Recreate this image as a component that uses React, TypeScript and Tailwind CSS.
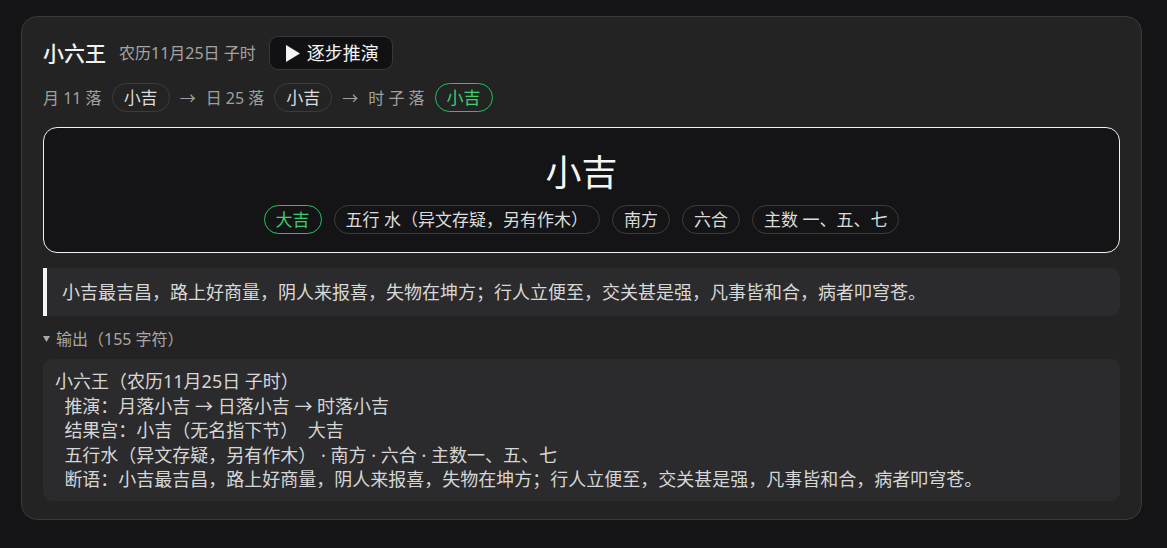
const font = "font-['Noto_Sans','Noto_Sans_CJK_SC',sans-serif]";

function Pill({ label, good }: { label: string; good?: boolean }) {
  return (
    <span
      className={`inline-flex h-[29px] items-center rounded-full border px-[11px] text-[17px] leading-none ${
        good ? 'border-[#22c55e] text-[#3ccf6e]' : 'border-[#3c3c3e] text-[#dcdcdc]'
      }`}
    >
      {label}
    </span>
  );
}

const outputLines = [
  '小六王（农历11月25日 子时）',
  '  推演：月落小吉 → 日落小吉 → 时落小吉',
  '  结果宫：小吉（无名指下节）  大吉',
  '  五行水（异文存疑，另有作木） · 南方 · 六合 · 主数一、五、七',
  '  断语：小吉最吉昌，路上好商量，阴人来报喜，失物在坤方；行人立便至，交关甚是强，凡事皆和合，病者叩穹苍。',
];

export default function App() {
  return (
    <div className={`min-h-[548px] w-full bg-[#141416] pt-4 ${font}`}>
      <div className="ml-[21px] w-[1121px] rounded-[16px] border border-[#3a3a3c] bg-[#232323] px-[21px] pt-[19px] pb-[18px]">
        {/* Header */}
        <div className="flex items-center gap-[13px]">
          <span className="text-[21px] font-medium leading-none text-[#f2f2f2]">小六王</span>
          <span className="text-[16px] leading-none text-[#a3a3a3]">农历11月25日 子时</span>
          <button className="flex h-[34px] items-center gap-[7px] rounded-[9px] border border-[#38383a] bg-[#111113] pl-[16px] pr-[13px] text-[18px] leading-none text-[#f5f5f5]">
            <svg width="14" height="17" viewBox="0 0 14 17">
              <polygon points="0,0 14,8.5 0,17" fill="#f5f5f5" />
            </svg>
            逐步推演
          </button>
        </div>

        {/* Steps */}
        <div className="mt-[13px] flex items-center gap-[10px] text-[16px] text-[#a0a0a0]">
          <span>月 11 落</span>
          <Pill label="小吉" />
          <span>→</span>
          <span>日 25 落</span>
          <Pill label="小吉" />
          <span>→</span>
          <span>时 子 落</span>
          <Pill label="小吉" good />
        </div>

        {/* Result */}
        <div className="mt-[15px] flex flex-col items-center rounded-[14px] border border-[#f0f0f0] bg-[#141416] pt-[19px] pb-[18px]">
          <div className="text-[36px] leading-[52px] text-[#f5f5f5]">小吉</div>
          <div className="mt-[6px] flex items-center gap-[12px]">
            <Pill label="大吉" good />
            <Pill label="五行 水（异文存疑，另有作木）" />
            <Pill label="南方" />
            <Pill label="六合" />
            <Pill label="主数 一、五、七" />
          </div>
        </div>

        {/* Verse */}
        <div className="mt-[15px] flex h-[48px] items-center rounded-r-[10px] border-l-4 border-[#f5f5f5] bg-[#2b2b2d] pl-[15px] text-[18px] text-[#d8d8d8]">
          小吉最吉昌，路上好商量，阴人来报喜，失物在坤方；行人立便至，交关甚是强，凡事皆和合，病者叩穹苍。
        </div>

        {/* Output */}
        <div className="mt-[11px] flex items-center gap-[6px] text-[16px] leading-[24px] text-[#a8a8a8]">
          <svg width="7" height="6" viewBox="0 0 7 6">
            <polygon points="0,0 7,0 3.5,6" fill="#a8a8a8" />
          </svg>
          <span>输出（155 字符）</span>
        </div>
        <div className="mt-[8px] rounded-[9px] bg-[#2b2b2d] px-[12px] pt-[10px] pb-[9px] text-[18px] leading-[24.5px] whitespace-pre-wrap text-[#d6d6d6]">
          {outputLines.map((l) => (
            <div key={l}>{l}</div>
          ))}
        </div>
      </div>
    </div>
  );
}
